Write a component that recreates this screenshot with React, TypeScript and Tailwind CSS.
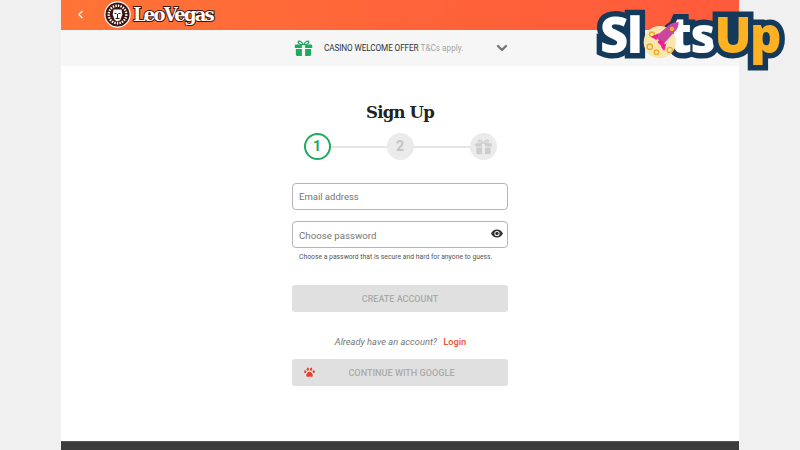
import { ChevronLeft, ChevronDown } from 'lucide-react';

function PawIcon() {
  return (
    <svg width="11" height="11" viewBox="0 0 12 12" className="text-[#e8402a]" fill="currentColor">
      <ellipse cx="1.4" cy="5.2" rx="1.2" ry="1.6" />
      <ellipse cx="4.2" cy="2.4" rx="1.2" ry="1.8" />
      <ellipse cx="7.8" cy="2.4" rx="1.2" ry="1.8" />
      <ellipse cx="10.6" cy="5.2" rx="1.2" ry="1.6" />
      <path d="M6 5.2c1.8 0 3.6 2.2 3.6 4 0 1.6-1.4 1.8-3.6 1.2-2.2.6-3.6.4-3.6-1.2 0-1.8 1.8-4 3.6-4z" />
    </svg>
  );
}

function GiftSolid({ className, w, h }: { className: string; w: number; h: number }) {
  return (
    <svg width={w} height={h} viewBox="0 0 20 18" className={className} fill="currentColor">
      <path d="M10 4.6C8.6 1.6 6.6.2 4.8.6 3 1 2.8 3 4.2 4.2c.6.5 1.4.8 2.2.9H1.2C.6 5.1.2 5.5.2 6v3h8V5.6h3.6V9h8V6c0-.5-.4-.9-1-.9h-5.2c.8-.1 1.6-.4 2.2-.9 1.4-1.2 1.2-3.2-.6-3.6C13.4.2 11.4 1.6 10 4.6zM5.4 2c.9-.2 2 .7 2.9 2.5-1.2 0-2.3-.2-2.9-.8-.5-.5-.6-1.5 0-1.7zm9.2 0c.6.2.5 1.2 0 1.7-.6.6-1.7.8-2.9.8.9-1.8 2-2.7 2.9-2.5z" />
      <path d="M1.4 10.2h6.8V18H3c-.9 0-1.6-.7-1.6-1.6zM11.8 10.2h6.8v6.2c0 .9-.7 1.6-1.6 1.6h-5.2z" />
    </svg>
  );
}

function EyeSolid() {
  return (
    <svg width="12" height="9" viewBox="0 0 24 16" className="text-[#333]" fill="currentColor">
      <path fillRule="evenodd" d="M12 0C6.5 0 2.2 3.3 0 8c2.2 4.7 6.5 8 12 8s9.8-3.3 12-8c-2.2-4.7-6.5-8-12-8zm0 13.2A5.2 5.2 0 1 1 12 2.8a5.2 5.2 0 0 1 0 10.4z" />
      <circle cx="12" cy="8" r="3.4" />
    </svg>
  );
}

function LionBadge() {
  return (
    <svg width="27" height="27" viewBox="0 0 27 27">
      <circle cx="13.5" cy="13.5" r="13.2" fill="#fff" />
      <circle cx="13.5" cy="13.5" r="12" fill="#3a1410" />
      <circle cx="13.5" cy="13.5" r="8.8" fill="none" stroke="#fff" strokeWidth="2.4" strokeDasharray="1.4 1.2" />
      <path d="M9.5 8.5l8 0 .8 5-2 5.5-2.8 1.5-2.8-1.5-2-5.5z" fill="#fff" />
      <path d="M10.5 12.5h2M14.5 12.5h2M13.5 13v4M11.5 17.5h4" stroke="#3a1410" strokeWidth="1" fill="none" />
    </svg>
  );
}

function Rocket() {
  return (
    <svg width="40" height="40" viewBox="0 0 36 36" className="absolute left-[42px] top-[12px]">
      <circle cx="16" cy="20" r="14.5" fill="#f8e6ac" />
      <circle cx="7" cy="24" r="2.4" fill="none" stroke="#f0a92c" strokeWidth="1.2" />
      <circle cx="13" cy="29" r="2" fill="none" stroke="#f0a92c" strokeWidth="1.2" />
      <circle cx="25" cy="27" r="2.4" fill="none" stroke="#f0a92c" strokeWidth="1.2" />
      <circle cx="9" cy="13" r="2.2" fill="none" stroke="#f0a92c" strokeWidth="1.2" />
      <path d="M12 15L25 4c3-2 6-2 8-2 0 3-1 6-3 8L19 22z" fill="#c9479e" />
      <path d="M14 20l5 5 2 2-1-7-4-3z" fill="#ee1f8f" />
      <path d="M8 15l7-3-2 6zM17 24l5-3-2 7z" fill="#ee1f8f" />
      <circle cx="27" cy="8" r="2" fill="#f5b125" />
    </svg>
  );
}

export default function App() {
  return (
    <div className="relative h-[450px] w-[800px] overflow-hidden bg-[#f0f0f0] font-['Roboto',sans-serif]">
      <div className="mx-auto flex h-full w-[678px] flex-col bg-white">
        <header className="flex h-[30px] shrink-0 items-center bg-gradient-to-r from-[#ff7436] via-[#ff6439] to-[#ff5a3c] pb-[1px] pl-[13px]">
          <ChevronLeft size={13} strokeWidth={2} className="text-white" />
          <div className="ml-[17px] flex items-center">
            <LionBadge />
            <span className="ml-[2px] font-['DejaVu_Serif',serif] text-[18px] font-bold leading-none tracking-[-1.8px] text-white [paint-order:stroke] [-webkit-text-stroke:2px_#3a1410]">
              LeoVegas
            </span>
          </div>
        </header>

        <div className="flex h-[36px] shrink-0 items-center bg-[#f6f6f6] pl-[233px]">
          <GiftSolid w={19} h={16} className="text-[#1eaa5f]" />
          <span className="ml-[11px] text-[8.2px] tracking-[-0.1px] text-[#333]">CASINO WELCOME OFFER</span>
          <span className="text-[8.2px] text-[#a5a5a5]">&nbsp;T&amp;Cs apply.</span>
          <ChevronDown size={16} strokeWidth={3.5} className="ml-[31px] text-[#777]" />
        </div>

        <main className="flex flex-1 flex-col items-center">
          <h1 className="mt-[36px] font-['DejaVu_Serif',serif] text-[16.5px] font-bold leading-[22px] tracking-[-0.8px] text-[#222]">
            Sign Up
          </h1>

          <div className="mt-[9px] flex w-[193px] items-center">
            <div className="flex h-[27px] w-[27px] shrink-0 items-center justify-center rounded-full border-2 border-[#1eaa5f] text-[14px] font-bold text-[#1eaa5f]">
              1
            </div>
            <div className="h-[2px] flex-1 bg-[#e6e6e6]" />
            <div className="flex h-[27px] w-[27px] shrink-0 items-center justify-center rounded-full bg-[#ebebeb] text-[14px] font-bold text-[#c4c4c4]">
              2
            </div>
            <div className="h-[2px] flex-1 bg-[#e6e6e6]" />
            <div className="flex h-[27px] w-[27px] shrink-0 items-center justify-center rounded-full bg-[#ebebeb]">
              <GiftSolid w={17} h={15} className="text-[#cdcdcd]" />
            </div>
          </div>

          <div className="mt-[23px] flex w-[216px] flex-col">
            <div className="flex h-[27px] items-center rounded-[4px] border border-[#b5b5b5] px-[6px] pt-[1px] text-[9.5px] text-[#757575]">
              Email address
            </div>
            <div className="mt-[11px] flex h-[27px] items-center justify-between rounded-[4px] border border-[#b5b5b5] pl-[6px] pr-[4px] pt-[3px] text-[9.7px] text-[#757575]">
              Choose password
              <span className="-mt-[6px] flex">
                <EyeSolid />
              </span>
            </div>
            <p className="mt-[5px] pl-[7px] text-[6.8px] leading-[9px] text-[#555]">
              Choose a password that is secure and hard for anyone to guess.
            </p>

            <button className="mt-[23px] flex h-[27px] items-center justify-center rounded-[3px] bg-[#e0e0e0] pt-[2px] text-[9px] font-medium text-[#aaa]">
              CREATE ACCOUNT
            </button>

            <div className="mt-[24px] flex h-[12px] items-center justify-center pl-[1px] text-[9.3px]">
              <span className="italic text-[#777]">Already have an account?</span>
              <span className="ml-[6px] font-medium text-[#f4512c]">Login</span>
            </div>

            <button className="relative mt-[11px] flex h-[27px] items-center justify-center rounded-[3px] bg-[#e0e0e0] pl-[3px] pt-[2px] text-[9.1px] font-medium text-[#aaa]">
              <span className="absolute left-[12px] top-[8px]">
                <PawIcon />
              </span>
              CONTINUE WITH GOOGLE
            </button>
          </div>
        </main>

        <footer className="h-[9px] shrink-0 border-t border-t-[#555] bg-[#3c3c3c]" />
      </div>

      <div className="absolute left-[600px] top-[8px] flex font-['Open_Sans',sans-serif] text-[49px] font-extrabold leading-[52px] tracking-[-1.4px] [paint-order:stroke] [-webkit-text-stroke:11px_#14395b]">
        <span className="text-white">Sl</span>
        <span className="w-[28px]" />
        <span className="text-white">ts</span>
        <span className="text-[#fbb122]">Up</span>
        <Rocket />
      </div>
    </div>
  );
}
